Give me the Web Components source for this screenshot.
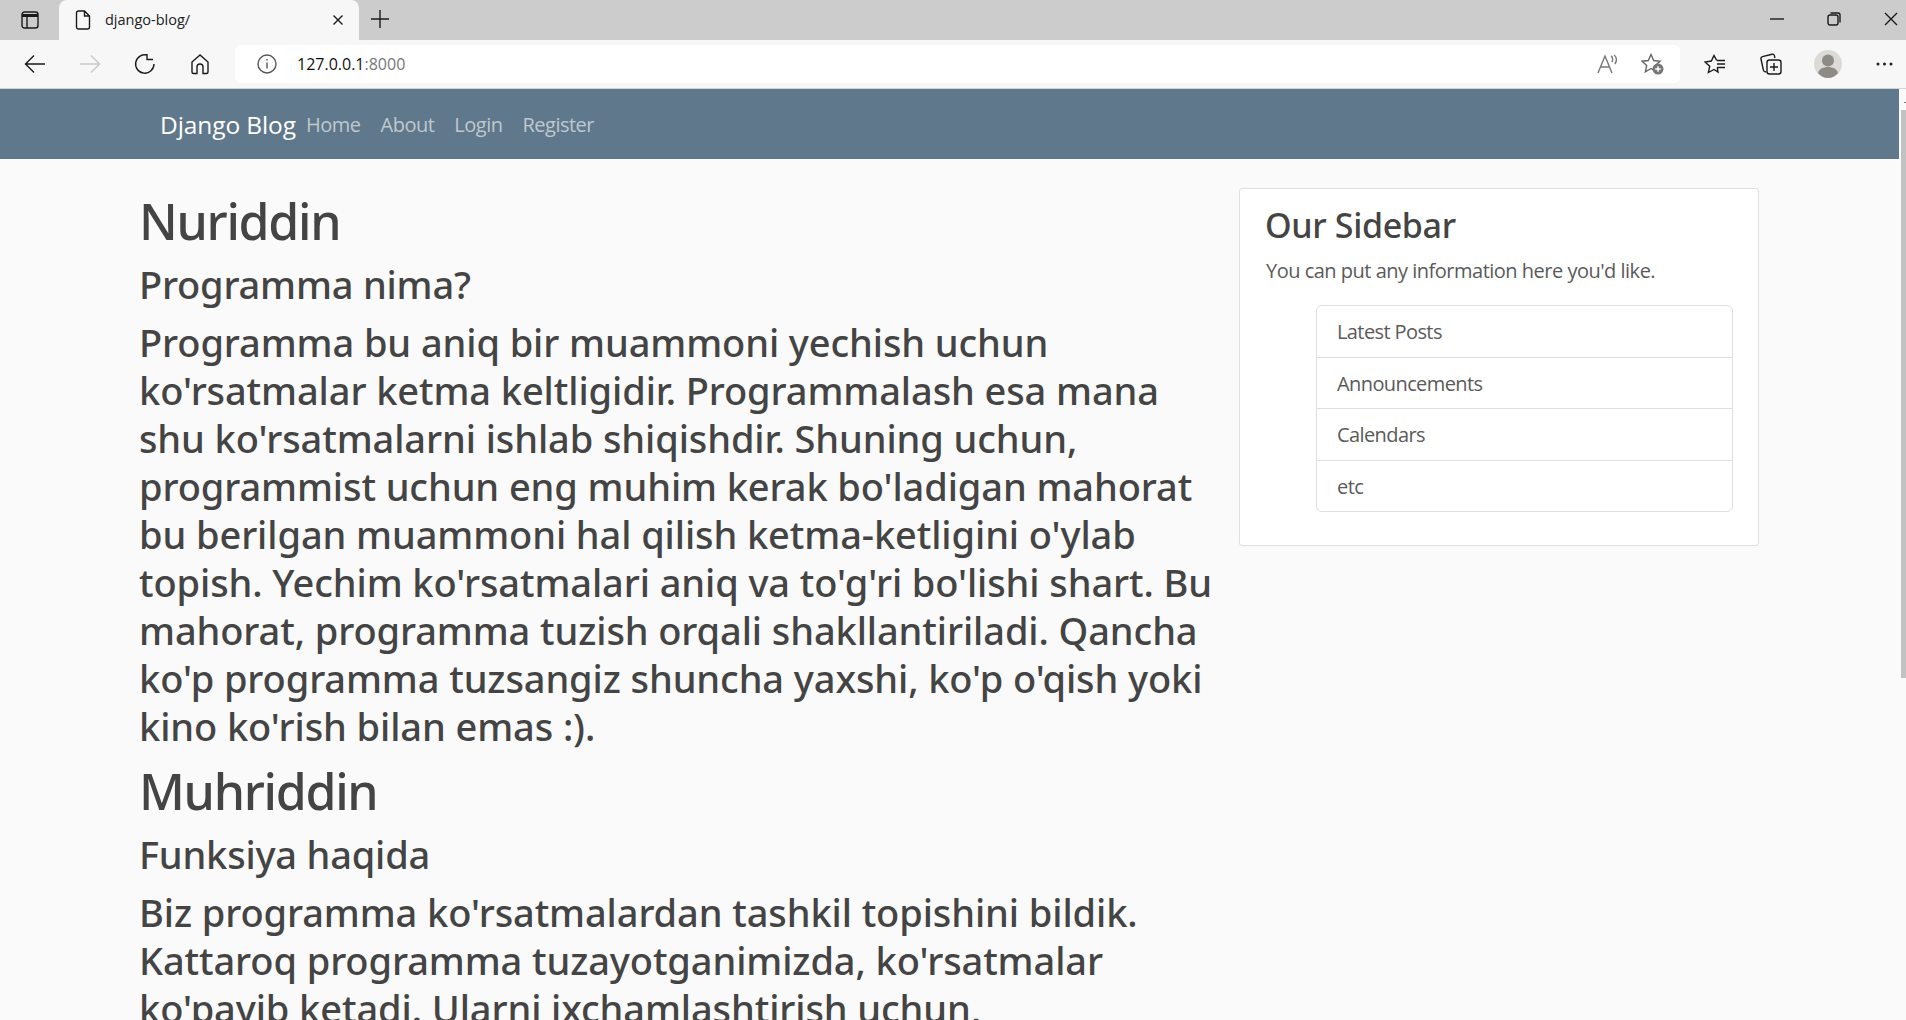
<!DOCTYPE html>
<html>
<head>
<meta charset="utf-8">
<title>django-blog/</title>
<style>
html, body { margin: 0; height: 100%; overflow: hidden; background: #fafafa; }
body { font-family: "Noto Sans", "Open Sans", sans-serif; color: #444; }
</style>
</head>
<body>
<browser-chrome></browser-chrome>
<page-scroll>
  <site-nav></site-nav>
  <blog-layout>
    <blog-post author="Nuriddin" title="Programma nima?">Programma bu aniq bir muammoni yechish uchun ko'rsatmalar ketma keltligidir. Programmalash esa mana shu ko'rsatmalarni ishlab shiqishdir. Shuning uchun, programmist uchun eng muhim kerak bo'ladigan mahorat bu berilgan muammoni hal qilish ketma-ketligini o'ylab topish. Yechim ko'rsatmalari aniq va to'g'ri bo'lishi shart. Bu mahorat, programma tuzish orqali shakllantiriladi. Qancha ko'p programma tuzsangiz shuncha yaxshi, ko'p o'qish yoki kino ko'rish bilan emas :).</blog-post>
    <blog-post author="Muhriddin" title="Funksiya haqida">Biz programma ko'rsatmalardan tashkil topishini bildik. Kattaroq programma tuzayotganimizda, ko'rsatmalar ko'payib ketadi. Ularni ixchamlashtirish uchun,</blog-post>
    <side-bar slot="side"></side-bar>
  </blog-layout>
</page-scroll>
<script>
// top of the browser window: tab strip + toolbar
class BrowserChrome extends HTMLElement {
  connectedCallback() {
    this.attachShadow({ mode: "open" }).innerHTML = `
    <style>
      :host { display: block; height: 89px; background: #f7f7f7; font-family: "Open Sans", sans-serif; }
      svg { display: block; fill: none; stroke: #1a1a1a; stroke-width: 1.4; flex: none; }
      .tabs { height: 40px; background: #cccccc; display: flex; align-items: flex-start; }
      .side { width: 59px; height: 40px; display: flex; align-items: center; justify-content: center; }
      .tab { width: 300px; height: 40px; background: #f7f7f7; border-radius: 8px 8px 0 0; display: flex; align-items: center; gap: 14px; padding: 0 15px 0 16px; box-sizing: border-box; font-size: 14.500px; color: #222; }
      .tab span { flex: 1; position: relative; top: -1px; }
      .plus { margin-left: 12px; margin-top: 10px; }
      .win { margin-left: auto; display: flex; align-items: center; gap: 43px; height: 38px; padding-right: 8px; }
      .bar { height: 48px; display: flex; align-items: center; border-bottom: 1px solid #d2d2d2; }
      .nav { display: flex; align-items: center; width: 235px; padding-left: 7px; box-sizing: border-box; flex: none; }
      .btn { width: 55px; display: flex; justify-content: center; flex: none; }
      .addr { width: 1445px; flex: none; height: 38px; background: #fff; border-radius: 6px; display: flex; align-items: center; padding: 0 0 0 22px; box-sizing: border-box; font-size: 16px; color: #111; }
      .addr b { font-weight: 400; margin-left: 20px; }
      .addr i { font-style: normal; color: #777; }
      .addr .r { margin-left: auto; display: flex; gap: 22px; padding-right: 16px; align-items: center; }
      .tools { display: flex; align-items: center; margin-left: 7px; flex: none; }
      .tools .btn { width: 56px; }
      .tools .avatar { margin-left: 1px; margin-right: -1px; }
      .tools .dots { width: auto; margin-left: 21px; }
    </style>
    <div class="tabs">
      <div class="side"><svg width="18" height="18" viewBox="0 0 18 18"><rect x="1" y="1" width="16" height="16" rx="2.500"/><path d="M1 4.500h16" stroke-width="3"/><path d="M6 5v12"/></svg></div>
      <div class="tab">
        <svg width="16" height="20" viewBox="0 0 16 20"><path d="M1.500 3a2 2 0 0 1 2-2H9.500L14.500 6v11a2 2 0 0 1-2 2h-9a2 2 0 0 1-2-2zM9.500 1v5h5"/></svg>
        <span>django-blog/</span>
        <svg width="12" height="12" viewBox="0 0 12 12"><path d="M1.500 1.500l9 9M10.500 1.500l-9 9"/></svg>
      </div>
      <svg class="plus" width="18" height="18" viewBox="0 0 18 18"><path d="M9 0v18M0 9h18"/></svg>
      <div class="win">
        <svg width="14" height="2" viewBox="0 0 14 2"><path d="M0 1h14"/></svg>
        <svg width="14" height="14" viewBox="0 0 14 14"><rect x="1" y="3" width="10" height="10" rx="2"/><path d="M3.500 1h7.500a2 2 0 0 1 2 2v7.500"/></svg>
        <svg width="14" height="14" viewBox="0 0 14 14"><path d="M1 1l12 12M13 1L1 13"/></svg>
      </div>
    </div>
    <div class="bar">
      <div class="nav">
        <div class="btn"><svg width="22" height="20" viewBox="0 0 22 20"><path d="M21 10H1.500M10 1.500L1.500 10l8.500 8.500"/></svg></div>
        <div class="btn"><svg width="22" height="20" viewBox="0 0 22 20" style="stroke:#c9c9c9"><path d="M1 10h19.500M12 1.500l8.500 8.500-8.500 8.500"/></svg></div>
        <div class="btn"><svg width="22" height="22" viewBox="0 0 22 22"><path d="M13.500 2.200A9.200 9.200 0 1 0 20 11M13 1v5.500h6"/></svg></div>
        <div class="btn"><svg width="20" height="22" viewBox="0 0 20 22"><path d="M10 2L2 9v10a1.500 1.500 0 0 0 1.500 1.500H7V14a3 3 0 0 1 6 0v6.500h3.500A1.500 1.500 0 0 0 18 19V9z"/></svg></div>
      </div>
      <div class="addr">
        <svg width="20" height="20" viewBox="0 0 20 20" style="stroke:#555"><circle cx="10" cy="10" r="9"/><path d="M10 8.500v6M10 5v1.500"/></svg>
        <b>127.0.0.1<i>:8000</i></b>
        <div class="r">
          <svg width="22" height="20" viewBox="0 0 22 20" style="stroke:#777"><path d="M1 19L8 2l7 17M3.500 13h9M14 2c2 1 2 4 1 6M17 1c3 2 3 6 1 9"/></svg>
          <svg width="23" height="22" viewBox="0 0 23 22" style="stroke:#666"><path d="M10 1.500l2.700 6 6.300.7-4.700 4.300 1.300 6.300L10 15.500l-5.600 3.300 1.300-6.300L1 8.200l6.300-.7z"/><circle cx="17" cy="16" r="5.500" fill="#777" stroke="none"/><path d="M17 13.200v5.600M14.200 16h5.600" stroke="#fff" stroke-width="1.500"/></svg>
        </div>
      </div>
      <div class="tools">
        <div class="btn"><svg width="22" height="20" viewBox="0 0 22 20"><path d="M12.700 6.500L10 1.500 7.300 7 1 8l4.700 4.300L4.400 18.500 10 15.500l4 2.500-.8-4.500M13 6.500h8M13 10h8M13 13.500h8"/></svg></div>
        <div class="btn"><svg width="22" height="22" viewBox="0 0 22 22"><path d="M6 19l-1-.300a2 2 0 0 1-1.600-1.500L1 6a2 2 0 0 1 1.500-2.400L12 1.200a2 2 0 0 1 2.400 1.400l.5 2.400"/><rect x="7" y="7" width="14" height="14" rx="2.500"/><path d="M14 10v8M10 14h8"/></svg></div>
        <div class="btn avatar"><svg width="28" height="28" viewBox="0 0 28 28" style="stroke:none"><circle cx="14" cy="14" r="14" fill="#dcdad7"/><circle cx="14" cy="10.500" r="6" fill="#8e8a85"/><path d="M4 23c1-4 5-6 10-6s9 2 10 6c-2.500 3-6 5-10 5s-7.500-2-10-5z" fill="#8e8a85"/></svg></div>
        <div class="btn dots"><svg width="17" height="4" viewBox="0 0 17 4" style="stroke:none;fill:#222"><circle cx="2" cy="2" r="1.500"/><circle cx="8.500" cy="2" r="1.500"/><circle cx="15" cy="2" r="1.500"/></svg></div>
      </div>
    </div>`;
  }
}
customElements.define("browser-chrome", BrowserChrome);

// page area with the scrollbar on the right
class PageScroll extends HTMLElement {
  connectedCallback() {
    this.attachShadow({ mode: "open" }).innerHTML = `
    <style>
      :host { display: flex; height: 931px; overflow: hidden; }
      .page { flex: 1; min-width: 0; }
      .sb { width: 7px; background: #fafafa; }
      .sb i { display: block; margin: 13px 0 0 5px; height: 1px; background: #777; }
      .sb div { margin: 7px 0 0 2px; height: 568px; background: #c2c2c2; }
    </style>
    <div class="page"><slot></slot></div>
    <div class="sb"><i></i><div></div></div>`;
  }
}
customElements.define("page-scroll", PageScroll);

class SiteNav extends HTMLElement {
  connectedCallback() {
    this.attachShadow({ mode: "open" }).innerHTML = `
    <style>
      :host { display: flex; align-items: center; height: 70px; background: #5f788b; padding-left: 160px; font-family: "Open Sans", sans-serif; }
      .brand { color: #fff; font-size: 24.500px; margin-right: 10px; letter-spacing: -.1px; }
      a { color: rgba(255,255,255,.6); font-size: 20px; margin-right: 20px; letter-spacing: -.5px; }
    </style>
    <span class="brand">Django Blog</span>
    <a>Home</a><a>About</a><a>Login</a><a>Register</a>`;
  }
}
customElements.define("site-nav", SiteNav);

class BlogLayout extends HTMLElement {
  connectedCallback() {
    this.attachShadow({ mode: "open" }).innerHTML = `
    <style>
      :host { display: grid; grid-template-columns: 1078px 520px; column-gap: 22px; padding: 32px 0 0 139px; align-items: start; }
      .main { min-width: 0; }
    </style>
    <div class="main"><slot></slot></div>
    <slot name="side"></slot>`;
  }
}
customElements.define("blog-layout", BlogLayout);

class BlogPost extends HTMLElement {
  connectedCallback() {
    this.attachShadow({ mode: "open" }).innerHTML = `
    <style>
      :host { display: block; font-weight: 500; color: #444; }
      h1, h2, .body { margin: 0; font-weight: 500; }
      h1 { font-size: 50px; line-height: 60px; margin-bottom: 12px; letter-spacing: -1.300px; }
      h2 { font-size: 38px; line-height: 42px; margin-bottom: 13px; letter-spacing: -.2px; }
      .body { font-size: 38px; line-height: 48px; margin-bottom: 11px; letter-spacing: -.1px; }
    </style>
    <h1></h1>
    <h2></h2>
    <div class="body"><slot></slot></div>`;
    this.shadowRoot.querySelector("h1").textContent = this.getAttribute("author");
    this.shadowRoot.querySelector("h2").textContent = this.getAttribute("title");
  }
}
customElements.define("blog-post", BlogPost);

class SideBar extends HTMLElement {
  connectedCallback() {
    this.attachShadow({ mode: "open" }).innerHTML = `
    <style>
      :host { display: block; background: #fff; border: 1px solid #dfdfdf; border-radius: 3px; padding: 15px 25px 33px 26px; color: #5a5a5a; font-size: 20px; margin-top: -3px; font-family: "Open Sans", sans-serif; }
      h3 { margin: 0 0 10px -1px; font-size: 34px; line-height: 42px; font-weight: 500; color: #444; letter-spacing: -.35px; font-family: "Noto Sans", sans-serif; }
      p { margin: 0 0 19px; line-height: 30px; letter-spacing: -.5px; }
      ul { list-style: none; margin: 0 0 0 50px; padding: 0; border: 1px solid #dfdfdf; border-radius: 6px; }
      li { height: 50.500px; line-height: 52px; padding-left: 20px; border-bottom: 1px solid #dfdfdf; letter-spacing: -.6px; }
      li:last-child { border-bottom: 0; }
    </style>
    <h3>Our Sidebar</h3>
    <p>You can put any information here you'd like.</p>
    <ul><li>Latest Posts</li><li>Announcements</li><li>Calendars</li><li>etc</li></ul>`;
  }
}
customElements.define("side-bar", SideBar);
</script>
</body>
</html>
